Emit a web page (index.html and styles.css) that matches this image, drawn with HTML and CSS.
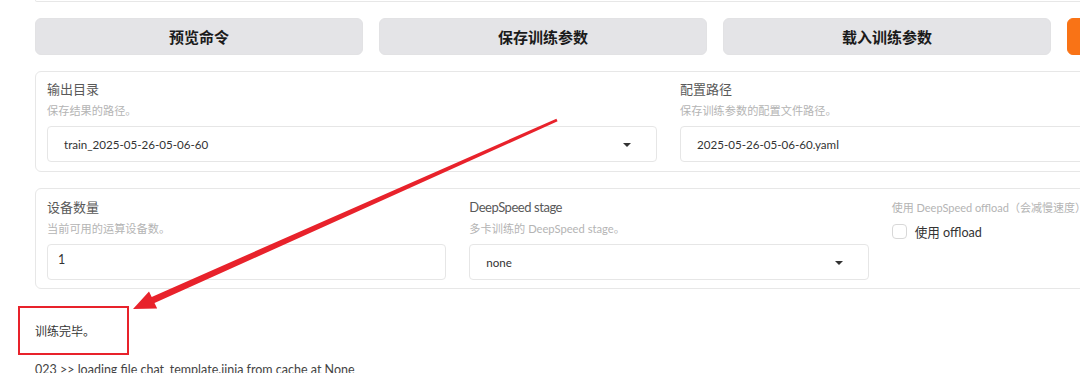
FILE: index.html
```html
<!DOCTYPE html>
<html lang="zh-CN">
<head>
<meta charset="utf-8">
<link rel="stylesheet" href="styles.css">
</head>
<body>
<div class="page">
  <div class="topcard"></div>
  <div class="btnrow">
    <button class="btn">预览命令</button>
    <button class="btn">保存训练参数</button>
    <button class="btn">载入训练参数</button>
    <button class="btn primary" aria-label="开始"></button>
  </div>

  <div class="card card1">
    <div class="field f-wide">
      <div class="label">输出目录</div>
      <div class="info">保存结果的路径。</div>
      <div class="input select"><span>train_2025-05-26-05-06-60</span><i class="caret"></i></div>
    </div>
    <div class="field f-wide">
      <div class="label">配置路径</div>
      <div class="info">保存训练参数的配置文件路径。</div>
      <div class="input"><span>2025-05-26-05-06-60.yaml</span></div>
    </div>
  </div>

  <div class="card card2">
    <div class="field f-third">
      <div class="label">设备数量</div>
      <div class="info">当前可用的运算设备数。</div>
      <div class="input number"><span>1</span></div>
    </div>
    <div class="field f-third">
      <div class="label latin">DeepSpeed stage</div>
      <div class="info">多卡训练的 DeepSpeed stage。</div>
      <div class="input select"><span>none</span><i class="caret"></i></div>
    </div>
    <div class="field f-third">
      <div class="info small-label">使用 DeepSpeed offload（会减慢速度）</div>
      <label class="check"><span class="box"></span><span>使用 offload</span></label>
    </div>
  </div>

  <div class="output">训练完毕。</div>
  <div class="log">023 &gt;&gt; loading file chat_template.jinja from cache at None</div>
</div>

<svg class="annot" width="1080" height="373" viewBox="0 0 1080 373" xmlns="http://www.w3.org/2000/svg">
  <rect x="19" y="307" width="109" height="47" fill="none" stroke="#e8222b" stroke-width="2"/>
  <polygon fill="#e8222b" points="133,309 157.2,308.6 154.5,303.1 557.6,121.3 556.4,118.7 151.7,296.9 149.0,291.4"/>
</svg>
</body>
</html>
```

FILE: styles.css
```css
html, body {
  margin: 0;
  padding: 0;
  background: #ffffff;
  overflow: hidden;
}
body {
  width: 1080px;
  height: 373px;
  position: relative;
  font-family: Lato, "Noto Sans CJK SC", sans-serif;
  color: #333;
}
.page {
  padding-left: 35px;
  width: 1360px;
}
.topcard {
  width: 1266px;
  height: 1px;
  border: 1px solid #e7e7e7;
  border-top: 0;
  border-radius: 0 0 6px 6px;
}
.btnrow {
  display: flex;
  gap: 16px;
  margin-top: 16px;
}
.btn {
  width: 328px;
  height: 37px;
  border: 1px solid #e2e2e4;
  border-radius: 6px;
  background: #e4e4e7;
  font-family: Lato, "Noto Sans CJK SC", sans-serif;
  font-size: 15px;
  font-weight: 700;
  color: #1b1b1b;
  padding: 0;
}
.btn.primary {
  background: #f97316;
  border-color: #f97316;
  color: #fff;
}
.card {
  width: 1244px;
  border: 1px solid #e7e7e7;
  border-radius: 6px;
  margin-top: 16px;
  padding: 7px 11px 9px;
  display: flex;
  gap: 23px;
}
.card2 {
  padding-top: 8px;
  padding-bottom: 8px;
}
.field {
  display: flex;
  flex-direction: column;
}
.f-wide { width: 610px; }
.f-third { width: 400px; }
.label {
  font-size: 13px;
  line-height: 20px;
  color: #595959;
}
.label.latin {
  letter-spacing: -0.45px;
}
.info {
  font-size: 11.2px;
  line-height: 16px;
  margin-top: 4px;
  color: #b4b4b4;
}
.small-label {
  margin-top: 2px;
  line-height: 18px;
  font-size: 11px;
}
.input {
  margin-top: 7px;
  height: 34px;
  border: 1px solid #e6e6e6;
  border-radius: 4px;
  display: flex;
  align-items: center;
  padding: 0 16px;
  font-size: 11.6px;
  color: #333;
  position: relative;
}
.input.number {
  padding-left: 10px;
  align-items: flex-start;
  padding-top: 7px;
  height: 27px;
  font-size: 12.5px;
}
.caret {
  position: absolute;
  right: 25px;
  top: 16px;
  width: 0;
  height: 0;
  border-left: 4px solid transparent;
  border-right: 4px solid transparent;
  border-top: 4px solid #333;
}
.check {
  display: flex;
  align-items: center;
  gap: 8px;
  margin-top: 5px;
  font-size: 12.6px;
  color: #333;
}
.box {
  width: 13px;
  height: 13px;
  border: 1px solid #d8d8d8;
  border-radius: 4px;
  background: #fff;
}
.output {
  margin-top: 34px;
  font-size: 12px;
  line-height: 18px;
  color: #333;
}
.log {
  margin-top: 20px;
  font-size: 12.5px;
  line-height: 18px;
  color: #444;
}
.annot {
  position: absolute;
  left: 0;
  top: 0;
  pointer-events: none;
}
```
